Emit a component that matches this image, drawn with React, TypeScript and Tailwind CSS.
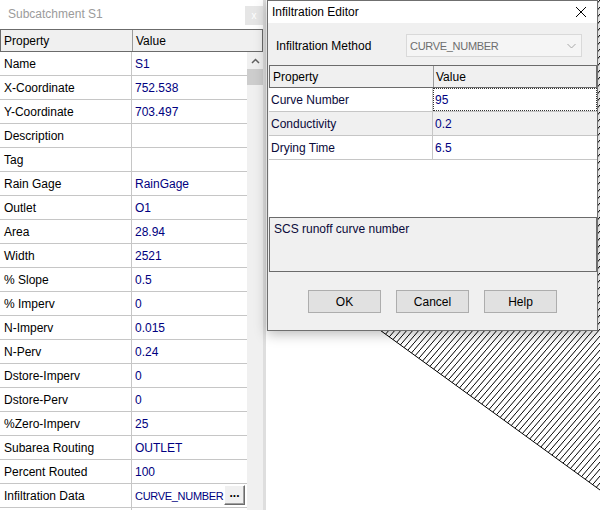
import React from "react";

const rows: [string, string][] = [
  ["Name", "S1"],
  ["X-Coordinate", "752.538"],
  ["Y-Coordinate", "703.497"],
  ["Description", ""],
  ["Tag", ""],
  ["Rain Gage", "RainGage"],
  ["Outlet", "O1"],
  ["Area", "28.94"],
  ["Width", "2521"],
  ["% Slope", "0.5"],
  ["% Imperv", "0"],
  ["N-Imperv", "0.015"],
  ["N-Perv", "0.24"],
  ["Dstore-Imperv", "0"],
  ["Dstore-Perv", "0"],
  ["%Zero-Imperv", "25"],
  ["Subarea Routing", "OUTLET"],
  ["Percent Routed", "100"],
  ["Infiltration Data", "CURVE_NUMBER"],
];

function LeftPanel() {
  return (
    <div className="w-[263px] h-full flex flex-col bg-white shrink-0">
      <div className="h-[29px] flex items-start justify-between shrink-0">
        <span className="pl-[8px] pt-[7px] text-[#9b9b9b] leading-[14px]">Subcatchment S1</span>
        <div className="mt-[6px] w-[18px] h-[19px] bg-[#e6e6e6] flex items-center justify-center text-white text-[10px] leading-none">
          x
        </div>
      </div>
      <div className="h-[23px] flex border border-[#6b6b6b] bg-[#f0f0f0] shrink-0">
        <div className="w-[132px] pl-[3px] flex items-center border-r border-[#9a9a9a]">Property</div>
        <div className="flex-1 pl-[3px] flex items-center">Value</div>
      </div>
      <div className="flex flex-1 min-h-0">
        <div className="w-[247px] flex flex-col">
          {rows.map(([n, v]) => {
            const infil = n === "Infiltration Data";
            return (
              <div key={n} className="h-[24px] shrink-0 flex border-b border-[#c6c6c6]">
                <div className="w-[132px] pl-[4px] flex items-center border-r border-[#c6c6c6] text-black">{n}</div>
                <div className="flex-1 pl-[3px] flex items-center text-[#000080] relative">
                  {infil ? (
                    <span className="text-[11px] tracking-[-0.3px]">{v}</span>
                  ) : (
                    v
                  )}
                  {infil && (
                    <div className="absolute right-[2px] top-[1px] w-[21px] h-[20px] bg-[#f0f0f0] border border-[#6b6b6b] border-t-white border-l-white shadow-[inset_-1px_-1px_0_#a0a0a0] flex items-center justify-center text-black font-bold leading-none pb-[4px]">
                      ...
                    </div>
                  )}
                </div>
              </div>
            );
          })}
          <div className="h-[24px] shrink-0 flex">
            <div className="w-[132px] border-r border-[#c6c6c6]" />
          </div>
        </div>
        <div className="w-[16px] bg-[#f0f0f0] flex flex-col">
          <div className="h-[17px] flex items-center justify-center">
            <svg width="9" height="6" viewBox="0 0 9 6">
              <path d="M1 5 L4.5 1.5 L8 5" fill="none" stroke="#606060" strokeWidth="1.5" />
            </svg>
          </div>
          <div className="h-[16px] bg-[#cdcdcd]" />
        </div>
      </div>
    </div>
  );
}

function Btn({ label }: { label: string }) {
  return (
    <div className="w-[73px] h-[23px] bg-[#e1e1e1] border border-[#adadad] flex items-center justify-center text-black">
      {label}
    </div>
  );
}

function Dialog() {
  return (
    <div className="absolute left-[1px] top-0 w-[331px] h-[331px] border border-[#6f6f6f] bg-[#f0f0f0] flex flex-col shadow-[0_3px_12px_rgba(0,0,0,0.28)]">
      <div className="h-[22px] bg-white flex items-center justify-between shrink-0">
        <span className="pl-[4px] text-black">Infiltration Editor</span>
        <svg width="12" height="12" viewBox="0 0 12 12" className="mr-[10px]">
          <path d="M1 1 L11 11 M11 1 L1 11" stroke="#000" strokeWidth="1" />
        </svg>
      </div>
      <div className="flex items-center mt-[11px] h-[23px] shrink-0">
        <span className="pl-[8px] w-[138px] text-black">Infiltration Method</span>
        <div className="w-[176px] h-[23px] border border-[#d9d9d9] bg-[#f5f5f5] flex items-center justify-between px-[3px]">
          <span className="text-[#6d6d6d] text-[11px] tracking-[-0.3px]">CURVE_NUMBER</span>
          <svg width="9" height="6" viewBox="0 0 9 6" className="mr-[2px]">
            <path d="M0.5 1 L4.5 5 L8.5 1" fill="none" stroke="#a8a8a8" strokeWidth="1" />
          </svg>
        </div>
      </div>
      <div className="ml-[1px] mt-[8px] h-[152px] bg-white flex flex-col shrink-0">
        <div className="h-[23px] flex border border-[#6b6b6b] bg-[#f0f0f0] shrink-0">
          <div className="w-[164px] pl-[3px] flex items-center border-r border-[#9a9a9a] text-black">Property</div>
          <div className="flex-1 pl-[2px] flex items-center text-black">Value</div>
        </div>
        <div className="h-[24px] flex border-b border-[#c6c6c6] bg-white">
          <div className="w-[164px] pl-[2px] flex items-center border-r border-[#c6c6c6] text-[#0a0a3a]">Curve Number</div>
          <div className="flex-1 pl-[1px] flex items-center text-[#000080] border border-dotted border-[#333]">95</div>
        </div>
        <div className="h-[24px] flex border-b border-[#c6c6c6] bg-[#f0f0f0]">
          <div className="w-[164px] pl-[2px] flex items-center border-r border-[#c6c6c6] text-[#0a0a3a]">Conductivity</div>
          <div className="flex-1 pl-[2px] flex items-center text-[#000080]">0.2</div>
        </div>
        <div className="h-[24px] flex border-b border-[#c6c6c6] bg-white">
          <div className="w-[164px] pl-[2px] flex items-center border-r border-[#c6c6c6] text-[#0a0a3a]">Drying Time</div>
          <div className="flex-1 pl-[2px] flex items-center text-[#000080]">6.5</div>
        </div>
      </div>
      <div className="ml-[1px] h-[55px] border border-[#6b6b6b] bg-[#f0f0f0] pl-[4px] pt-[4px] text-[#0a0a3a] shrink-0">
        SCS runoff curve number
      </div>
      <div className="flex gap-[15px] mt-[18px] pl-[40px]">
        <Btn label="OK" />
        <Btn label="Cancel" />
        <Btn label="Help" />
      </div>
    </div>
  );
}

export default function App() {
  return (
    <div className="w-[600px] h-[510px] overflow-hidden bg-white flex font-['Liberation_Sans',Arial,sans-serif] text-[12px] leading-[14px]">
      <LeftPanel />
      <div className="w-[3px] h-full bg-[#dedede] shrink-0" />
      <div className="flex-1 relative">
        <svg className="absolute inset-0" width="334" height="510" viewBox="0 0 334 510">
          <defs>
            <pattern id="hatch" patternUnits="userSpaceOnUse" width="6" height="7">
              <path d="M0 7 L6 0" stroke="#000" strokeWidth="1" />
            </pattern>
          </defs>
          <g transform="translate(-266 0)">
            <polygon points="600,490 300,272 300,0 600,0" fill="url(#hatch)" />
            <line x1="300" y1="272" x2="600" y2="490" stroke="#000" strokeWidth="1" />
          </g>
        </svg>
        <Dialog />
      </div>
    </div>
  );
}
